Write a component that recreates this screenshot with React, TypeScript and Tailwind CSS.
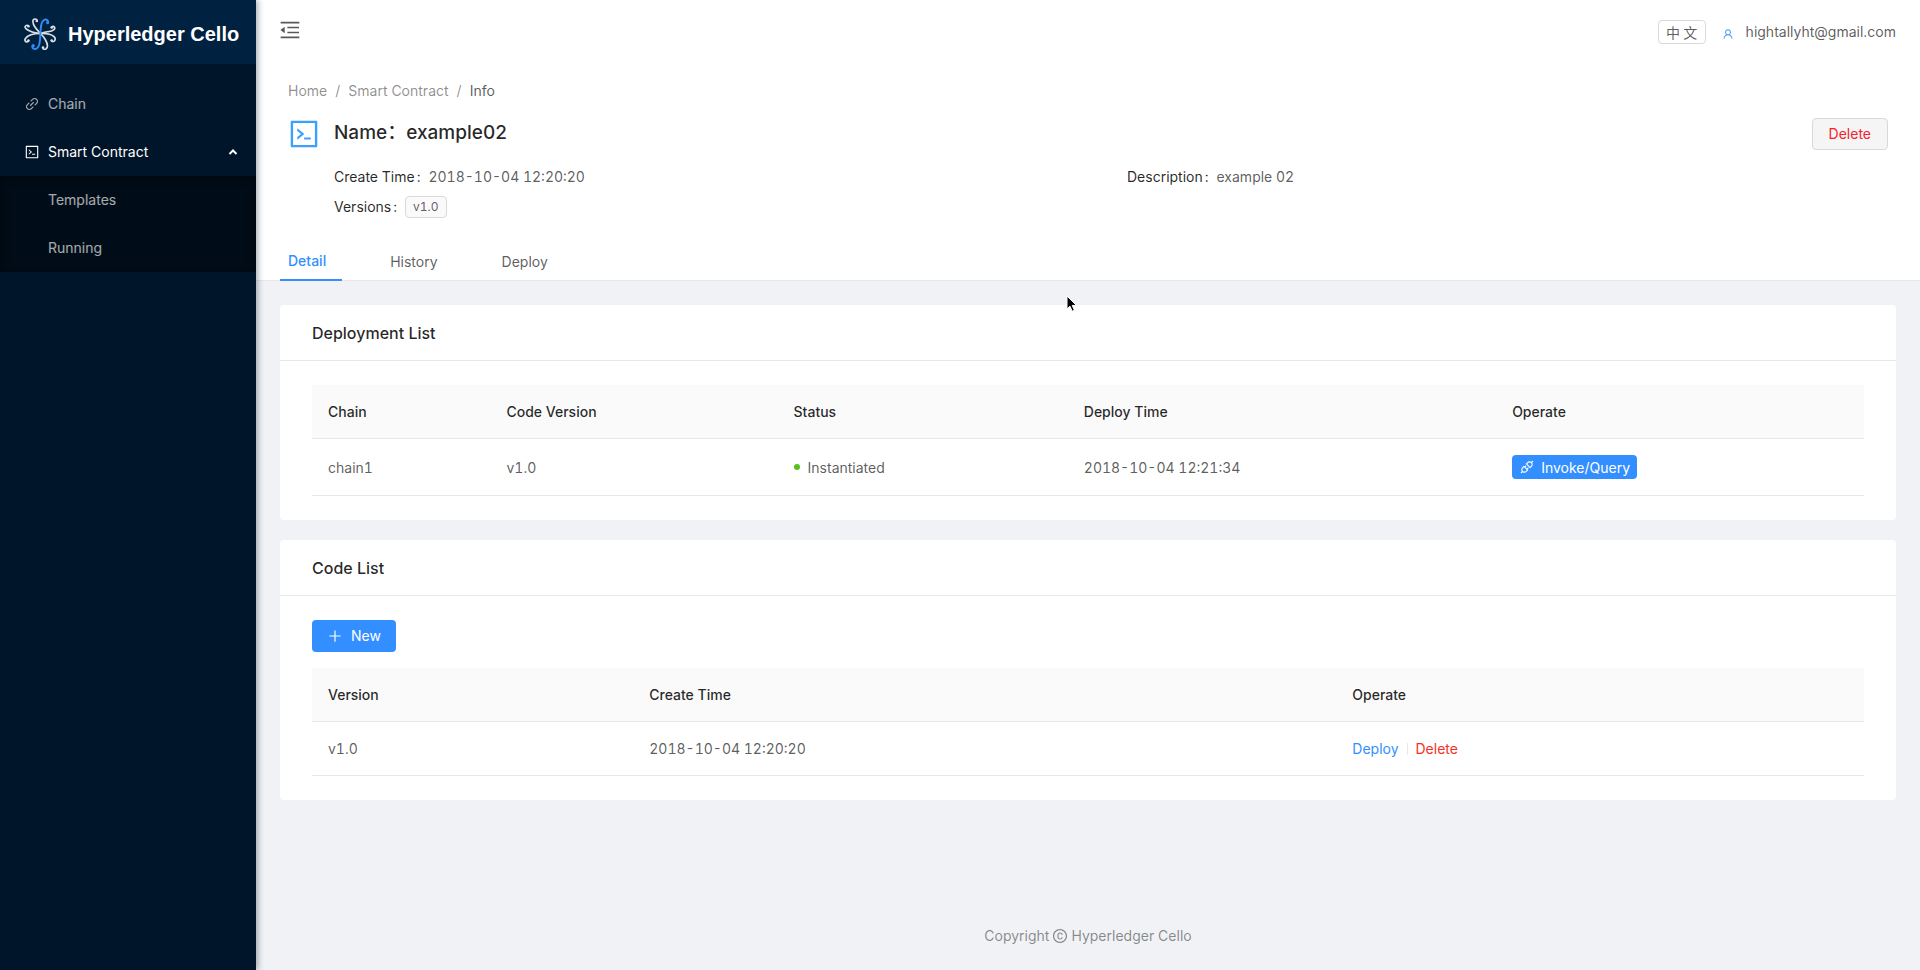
import React from 'react';
import {
  AiOutlineApi,
  AiOutlineCode,
  AiOutlineCopyright,
  AiOutlineLink,
  AiOutlineMenuFold,
  AiOutlinePlus,
  AiOutlineUser,
} from 'react-icons/ai';

const Logo: React.FC = () => (
  <svg viewBox="0 0 32 32" className="h-8 w-8 shrink-0" fill="none" strokeLinecap="round">
    <g stroke="#d9dee4" strokeWidth="1.7">
      <path d="M16.5 15.5C14 13 12.5 11.5 11 9C8.5 5.5 8 1 11 1C12.5 1 13.3 1.8 13 2.8" />
      <path d="M16.5 15.5C12 15 9 14.5 6.5 13.2C2.5 11.5 0 9.5 1.5 8C2.5 7 4 7 4.5 8" />
      <path d="M16.5 15.5C12 15.5 9.5 16 7 16.8C3 18.3 0 20.5 1.2 23C2 24.3 4 24 4.6 22.8" />
      <path d="M16.5 15.5C20 14 22 14 25 13.5C29 13 31.5 11 30.5 9.3C29.8 8 28 8.2 27.5 9.3" />
      <path d="M16.5 15.5C20 15.3 22.5 15.5 25.5 16.3C30 17.5 31.8 20 31 22C30.3 24 28 23.8 27.5 22.7" />
      <path d="M16.5 15.5C18.5 17.5 20.3 19.5 21.5 22C23.5 25.5 24 29 22.3 30.7C21 31.8 18.8 31.3 18.8 29.7" />
    </g>
    <g fill="#d9dee4">
      <circle cx="12.8" cy="3" r="1.3" />
      <circle cx="4.4" cy="8.3" r="1.3" />
      <circle cx="4.4" cy="22.6" r="1.3" />
      <circle cx="27.7" cy="9.5" r="1.3" />
      <circle cx="27.7" cy="22.5" r="1.3" />
      <circle cx="19" cy="29.5" r="1.3" />
    </g>
    <g stroke="#2f8df5" strokeWidth="2">
      <path d="M24 4.5C24.5 2 22 1 20 2C17 3.8 16.8 8 16.6 12L16 22C15.6 27 14.5 31 11 31C8.5 31 7.7 29 8.8 27.5" />
    </g>
    <circle cx="23.6" cy="4.6" r="1.6" fill="#2f8df5" />
    <circle cx="9.2" cy="27.7" r="1.6" fill="#2f8df5" />
  </svg>
);

const Sidebar: React.FC = () => (
  <aside className="z-10 w-64 shrink-0 bg-[#001529] text-sm text-white/65 shadow-[2px_0_6px_rgba(0,21,41,0.35)]">
    <a href="#" className="flex h-16 items-center gap-3 bg-[#002140] pt-1 pl-6">
      <Logo />
      <span className="font-['Liberation_Sans',sans-serif] text-xl font-bold whitespace-nowrap text-white">
        Hyperledger Cello
      </span>
    </a>
    <nav className="pt-4">
      <a href="#" className="flex h-12 items-center gap-2 px-6">
        <AiOutlineLink className="h-4 w-4" />
        Chain
      </a>
      <button className="flex h-12 w-full items-center gap-2 pr-[18px] pl-6 text-white">
        <AiOutlineCode className="h-4 w-4" />
        <span>Smart Contract</span>
        <svg viewBox="0 0 10 10" className="ml-auto h-2.5 w-2.5" fill="none" stroke="currentColor" strokeWidth="2">
          <path d="M1.5 7L5 3.5L8.5 7" />
        </svg>
      </button>
      <div className="bg-[#000c17] shadow-[inset_0_2px_8px_rgba(0,0,0,0.45)]">
        <a href="#" className="flex h-12 items-center pl-12">Templates</a>
        <a href="#" className="flex h-12 items-center pl-12">Running</a>
      </div>
    </nav>
  </aside>
);

const Header: React.FC = () => (
  <header className="flex h-16 items-center justify-between bg-white px-6">
    <button aria-label="Toggle menu" className="-ml-0.5 mb-1">
      <AiOutlineMenuFold className="h-6 w-6" />
    </button>
    <div className="flex items-center">
      <button className="h-6 w-12 rounded border border-[#d9d9d9] font-['Noto_Sans_CJK_SC',sans-serif] text-sm leading-none">
        中 文
      </button>
      <AiOutlineUser className="mt-1 ml-4 h-3 w-3 text-[#3d97ff]" />
      <span className="ml-3">hightallyht@gmail.com</span>
    </div>
  </header>
);

const Term: React.FC<{ label: string; children: React.ReactNode }> = ({ label, children }) => (
  <div className="flex items-center leading-[22px] tabular-nums">
    <span className="text-black/85">{label}</span>
    <span className="mr-2 ml-0.5 text-black/85">:</span>
    {children}
  </div>
);

const PageHeader: React.FC = () => (
  <section className="border-b border-[#e8e8e8] bg-white px-8 pt-4">
    <nav className="flex gap-2 leading-[22px] text-black/45">
      <a href="#">Home</a>
      <span>/</span>
      <a href="#">Smart Contract</a>
      <span>/</span>
      <span className="text-black/65">Info</span>
    </nav>
    <div className="mt-3.5 flex gap-3">
      <AiOutlineCode className="-ml-0.5 h-9 w-9 shrink-0 p-px text-[#3ba0ff]" />
      <div className="flex-1">
        <div className="flex items-start justify-between pt-0.5">
          <h1 className="font-[Inter,'Noto_Sans_CJK_SC',sans-serif] text-[19px] leading-[30px] font-medium text-black/85">
            Name：example02
          </h1>
          <button className="h-8 rounded border border-[#d9d9d9] bg-[#f5f5f5] px-4 text-[#f5222d]">
            Delete
          </button>
        </div>
        <div className="mt-4 grid grid-cols-2 gap-x-8 gap-y-2">
          <Term label="Create Time">2018-10-04 12:20:20</Term>
          <Term label="Description">example 02</Term>
          <Term label="Versions">
            <span className="rounded border border-[#d9d9d9] bg-[#fafafa] px-[7px] text-xs leading-5">v1.0</span>
          </Term>
        </div>
      </div>
    </div>
    <div className="mt-5 -ml-2 flex gap-8 leading-[21px]">
      <button className="-mb-px border-b-2 border-[#338fff] pt-3 pr-4 pb-2 pl-2 font-medium text-[#338fff]">Detail</button>
      <button className="px-4 pt-3 pb-2">History</button>
      <button className="px-4 pt-3 pb-2">Deploy</button>
    </div>
  </section>
);

const Card: React.FC<{ title: string; children: React.ReactNode }> = ({ title, children }) => (
  <section className="rounded-sm bg-white">
    <h2 className="border-b border-[#e8e8e8] px-8 pt-4 pb-[15px] text-base leading-6 font-medium text-black/85">{title}</h2>
    <div className="px-8 py-6">{children}</div>
  </section>
);

const Th: React.FC<{ className: string; children: React.ReactNode }> = ({ className, children }) => (
  <th className={`border-b border-[#e8e8e8] px-4 py-4 font-medium text-black/85 ${className}`}>{children}</th>
);

const Td: React.FC<{ children: React.ReactNode }> = ({ children }) => (
  <td className="border-b border-[#e8e8e8] px-4 py-4 tabular-nums">{children}</td>
);

const App: React.FC = () => {
  return (
    <div className="flex min-h-screen bg-[#f0f2f5] font-[Inter,sans-serif] text-sm text-black/65">
      <Sidebar />
      <div className="flex min-w-0 flex-1 flex-col">
        <Header />
        <PageHeader />

        <main className="flex flex-col gap-5 p-6">
          <Card title="Deployment List">
            <table className="w-full table-fixed text-left leading-[21px]">
              <thead className="bg-[#fafafa]">
                <tr>
                  <Th className="w-[11.5%]">Chain</Th>
                  <Th className="w-[18.5%]">Code Version</Th>
                  <Th className="w-[18.7%]">Status</Th>
                  <Th className="w-[27.6%]">Deploy Time</Th>
                  <Th className="w-auto">Operate</Th>
                </tr>
              </thead>
              <tbody>
                <tr>
                  <Td>chain1</Td>
                  <Td>v1.0</Td>
                  <Td>
                    <span className="flex items-center gap-2">
                      <i className="h-1.5 w-1.5 rounded-full bg-[#52c41a]" />
                      Instantiated
                    </span>
                  </Td>
                  <Td>2018-10-04 12:21:34</Td>
                  <Td>
                    <button className="flex h-6 items-center gap-1.5 rounded bg-[#338fff] px-[7px] text-white">
                      <AiOutlineApi className="h-4 w-4" />
                      Invoke/Query
                    </button>
                  </Td>
                </tr>
              </tbody>
            </table>
          </Card>

          <Card title="Code List">
            <button className="mb-4 flex h-8 items-center gap-2 rounded bg-[#338fff] px-[15px] text-white">
              <AiOutlinePlus className="h-4 w-4" />
              New
            </button>
            <table className="w-full table-fixed text-left leading-[21px]">
              <thead className="bg-[#fafafa]">
                <tr>
                  <Th className="w-[20.7%]">Version</Th>
                  <Th className="w-[45.3%]">Create Time</Th>
                  <Th className="w-auto">Operate</Th>
                </tr>
              </thead>
              <tbody>
                <tr>
                  <Td>v1.0</Td>
                  <Td>2018-10-04 12:20:20</Td>
                  <Td>
                    <span className="flex items-center gap-2">
                      <a href="#" className="text-[#338fff]">Deploy</a>
                      <span className="h-3 w-px bg-[#e8e8e8]" />
                      <a href="#" className="text-[#f5301f]">Delete</a>
                    </span>
                  </Td>
                </tr>
              </tbody>
            </table>
          </Card>
        </main>

        <footer className="mt-auto flex items-center justify-center gap-[3px] pb-6 leading-[21px] text-black/45">
          Copyright
          <AiOutlineCopyright className="h-4 w-4" />
          Hyperledger Cello
        </footer>
      </div>

      {/* mouse pointer */}
      <svg viewBox="0 0 12 18" className="pointer-events-none absolute top-[295px] left-[1066px] h-[18px] w-3">
        <path d="M1 1V14L4 11.2L6.2 16.2L8.4 15.2L6.2 10.4H10.4Z" fill="#000" stroke="#fff" strokeWidth="1" />
      </svg>
    </div>
  );
};

export default App;
